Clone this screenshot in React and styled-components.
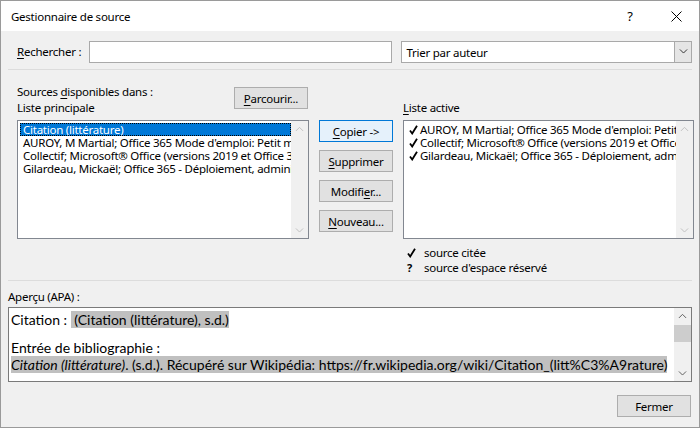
import React from "react";
import styled, { createGlobalStyle } from "styled-components";

const GlobalStyle = createGlobalStyle`
  body {
    margin: 0;
    font-family: "Noto Sans", "Open Sans", sans-serif;
    font-size: 11.5px;
    letter-spacing: -0.25px;
    color: #000;
  }
`;

const Window = styled.div`
  width: 700px;
  height: 428px;
  box-sizing: border-box;
  border: 1px solid #9a9a9a;
  background: #f0f0f0;
  display: flex;
  flex-direction: column;
  overflow: hidden;
`;

const TitleBar = styled.div`
  height: 30px;
  background: #fff;
  display: flex;
  align-items: center;
  padding-left: 10px;
`;

const TitleText = styled.div`
  flex: 1;
`;

const TitleIcon = styled.div`
  width: 46px;
  height: 30px;
  display: flex;
  align-items: center;
  justify-content: center;
  font-size: 13px;
`;

const Body = styled.div`
  flex: 1;
  display: flex;
  flex-direction: column;
  padding: 10px 7px 0 7px;
`;

const Section = styled.div`
  padding-left: 9px;
  display: flex;
`;

const SearchRow = styled(Section)`
  align-items: center;
  height: 22px;
`;

const Label = styled.span`
  line-height: 16px;
  white-space: nowrap;
`;

const SearchLabel = styled(Label)`
  width: 72px;
`;

const Mn = styled.span`
  text-decoration: underline;
  text-underline-offset: 2px;
`;

const TextInput = styled.div`
  width: 304px;
  height: 22px;
  box-sizing: border-box;
  border: 1px solid #a9a9a9;
  background: #fff;
`;

const Select = styled.div`
  margin-left: 9px;
  width: 291px;
  height: 22px;
  box-sizing: border-box;
  border: 1px solid #a9a9a9;
  background: #fff;
  display: flex;
  align-items: center;
`;

const SelectText = styled.div`
  flex: 1;
  padding-left: 4px;
`;

const SelectButton = styled.div`
  width: 17px;
  height: 20px;
  box-sizing: border-box;
  border-left: 1px solid #a9a9a9;
  background: #e5e5e5;
  display: flex;
  align-items: center;
  justify-content: center;
`;

const Separator = styled.div`
  height: 1px;
  background: #dcdcdc;
  margin-top: ${(p) => p.mt || 0}px;
`;

const Middle = styled(Section)`
  height: 210px;
`;

const Column = styled.div`
  display: flex;
  flex-direction: column;
  width: ${(p) => p.w}px;
`;

const ColumnHeader = styled.div`
  height: 50px;
  display: flex;
  align-items: flex-end;
  justify-content: space-between;
  padding-bottom: 4px;
  box-sizing: border-box;
`;

const HeaderLabels = styled.div`
  display: flex;
  flex-direction: column;
`;

const Button = styled.div`
  width: 74px;
  height: 22px;
  box-sizing: border-box;
  border: 1px solid ${(p) => (p.primary ? "#0078d7" : "#adadad")};
  background: ${(p) => (p.primary ? "#e5f1fb" : "#e1e1e1")};
  display: flex;
  align-items: center;
  justify-content: center;
  white-space: nowrap;
`;

const BrowseButton = styled(Button)`
  margin-bottom: 7px;
  margin-right: 1px;
`;

const ButtonStack = styled.div`
  margin: 50px 10px 0 10px;
  display: flex;
  flex-direction: column;
  gap: 8px;
`;

const ListBox = styled.div`
  height: 119px;
  box-sizing: border-box;
  border: 1px solid #828790;
  background: #fff;
  display: flex;
`;

const ListItems = styled.div`
  flex: 1;
  min-width: 0;
  padding: 2px 0 0 2px;
  overflow: hidden;
`;

const ListItem = styled.div`
  height: 13px;
  line-height: 13px;
  white-space: nowrap;
  padding-left: 3px;
  box-sizing: border-box;
  background: ${(p) => (p.selected ? "#0078d7" : "transparent")};
  color: ${(p) => (p.selected ? "#fff" : "#000")};
  outline: ${(p) => (p.selected ? "1px dotted #000" : "none")};
  outline-offset: -1px;
  display: flex;
  align-items: center;
  gap: 2px;
  overflow: hidden;
`;

const ItemText = styled.span`
  flex-shrink: 0;
`;

const ScrollBar = styled.div`
  width: 17px;
  flex-shrink: 0;
  background: #f0f0f0;
  display: flex;
  flex-direction: column;
  justify-content: space-between;
  align-items: center;
  padding: 5px 0;
  position: relative;
`;

const Thumb = styled.div`
  position: absolute;
  left: 0;
  right: 0;
  top: 17px;
  height: 17px;
  background: #cdcdcd;
`;

const Legend = styled.div`
  margin-top: 6px;
  padding-left: 4px;
  display: flex;
  flex-direction: column;
`;

const LegendRow = styled.div`
  display: flex;
  align-items: center;
  height: 15px;
`;

const LegendMark = styled.div`
  width: 17px;
  display: flex;
  justify-content: flex-start;
  font-weight: bold;
  font-size: 11px;
`;

const PreviewLabel = styled.div`
  margin-top: 8px;
  line-height: 16px;
`;

const Preview = styled.div`
  margin-top: 2px;
  height: 75px;
  box-sizing: border-box;
  border: 1px solid #7a7a7a;
  background: #fff;
  display: flex;
  font-family: "Lato", "Open Sans", sans-serif;
  font-size: 14px;
  letter-spacing: 0;
`;

const PreviewText = styled.div`
  flex: 1;
  min-width: 0;
  padding: 3px 0 0 2px;
  overflow: hidden;
  white-space: nowrap;
`;

const PreviewLine = styled.div`
  line-height: 17px;
  margin-top: ${(p) => p.mt || 0}px;
`;

const Hl = styled.span`
  background: #c0c0c0;
`;

const Footer = styled.div`
  display: flex;
  justify-content: flex-end;
  margin-top: 13px;
  padding-right: 1px;
`;

const Chevron = ({ up, color = "#606060", size = 9 }) => (
  <svg width={size} height={size * 0.6} viewBox="0 0 10 6">
    <path
      d={up ? "M1 5.5 L5 1.5 L9 5.5" : "M1 0.5 L5 4.5 L9 0.5"}
      fill="none"
      stroke={color}
      strokeWidth="1.1"
    />
  </svg>
);

const Check = () => (
  <svg width="9" height="10" viewBox="0 0 9 10" style={{ flexShrink: 0 }}>
    <path d="M1 5.5 L3.2 8.5 L8 0.8" fill="none" stroke="#000" strokeWidth="1.8" />
  </svg>
);

const mainList = [
  "Citation (littérature)",
  "AUROY, M Martial; Office 365 Mode d'emploi: Petit manuel",
  "Collectif; Microsoft® Office (versions 2019 et Office 365)",
  "Gilardeau, Mickaël; Office 365 - Déploiement, administration",
];

const activeList = mainList.slice(1);

const App = () => (
  <>
    <GlobalStyle />
    <Window>
      <TitleBar>
        <TitleText>Gestionnaire de source</TitleText>
        <TitleIcon>?</TitleIcon>
        <TitleIcon>
          <svg width="11" height="11" viewBox="0 0 11 11">
            <path d="M0.5 0.5 L10.5 10.5 M10.5 0.5 L0.5 10.5" stroke="#000" strokeWidth="1" />
          </svg>
        </TitleIcon>
      </TitleBar>
      <Body>
        <SearchRow>
          <SearchLabel>
            <Mn>R</Mn>echercher :
          </SearchLabel>
          <TextInput />
          <Select>
            <SelectText>Trier par auteur</SelectText>
            <SelectButton>
              <Chevron color="#333" size={9} />
            </SelectButton>
          </Select>
        </SearchRow>
        <Separator mt={6} />
        <Middle>
          <Column w={292}>
            <ColumnHeader>
              <HeaderLabels>
                <Label>
                  Sources <Mn>d</Mn>isponibles dans :
                </Label>
                <Label>Liste principale</Label>
              </HeaderLabels>
              <BrowseButton>
                <Mn>P</Mn>arcourir...
              </BrowseButton>
            </ColumnHeader>
            <ListBox>
              <ListItems>
                {mainList.map((t, i) => (
                  <ListItem key={t} selected={i === 0}>
                    <ItemText>{t}</ItemText>
                  </ListItem>
                ))}
              </ListItems>
              <ScrollBar>
                <Chevron up color="#c0c0c0" />
                <Chevron color="#c0c0c0" />
              </ScrollBar>
            </ListBox>
          </Column>
          <ButtonStack>
            <Button primary>
              <Mn>C</Mn>opier -&gt;
            </Button>
            <Button>
              <Mn>S</Mn>upprimer
            </Button>
            <Button>
              Modifi<Mn>e</Mn>r...
            </Button>
            <Button>
              <Mn>N</Mn>ouveau...
            </Button>
          </ButtonStack>
          <Column w={291}>
            <ColumnHeader>
              <Label>
                <Mn>L</Mn>iste active
              </Label>
            </ColumnHeader>
            <ListBox>
              <ListItems>
                {activeList.map((t) => (
                  <ListItem key={t}>
                    <Check />
                    <ItemText>{t}</ItemText>
                  </ListItem>
                ))}
              </ListItems>
              <ScrollBar>
                <Chevron up color="#c0c0c0" />
                <Chevron color="#c0c0c0" />
              </ScrollBar>
            </ListBox>
            <Legend>
              <LegendRow>
                <LegendMark>
                  <Check />
                </LegendMark>
                source citée
              </LegendRow>
              <LegendRow>
                <LegendMark>?</LegendMark>
                source d'espace réservé
              </LegendRow>
            </Legend>
          </Column>
        </Middle>
        <Separator />
        <PreviewLabel>Aperçu (APA) :</PreviewLabel>
        <Preview>
          <PreviewText>
            <PreviewLine>
              Citation : <Hl>&nbsp;(Citation (littérature), s.d.)</Hl>
            </PreviewLine>
            <PreviewLine mt={11}>Entrée de bibliographie :</PreviewLine>
            <PreviewLine>
              <Hl>
                <i>Citation (littérature)</i>. (s.d.). Récupéré sur Wikipédia:
                https://fr.wikipedia.org/wiki/Citation_(litt%C3%A9rature)
              </Hl>
            </PreviewLine>
          </PreviewText>
          <ScrollBar>
            <Chevron up color="#606060" />
            <Thumb />
            <Chevron color="#606060" />
          </ScrollBar>
        </Preview>
        <Footer>
          <Button>Fermer</Button>
        </Footer>
      </Body>
    </Window>
  </>
);

export default App;
